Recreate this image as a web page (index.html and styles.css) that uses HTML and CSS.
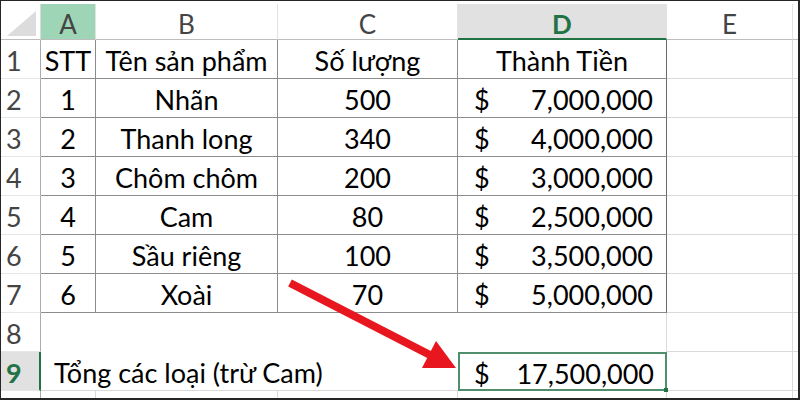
FILE: index.html
```html
<!DOCTYPE html>
<html lang="vi">
    <head>
        <meta charset="UTF-8">
        <title>Bảng tính</title>
        <link rel="stylesheet" href="styles.css">
    </head>
    <body>
        <div class="frame">
            <div class="sheet">
                <!-- tiêu đề cột -->
                <div class="corner"><span class="tri"></span></div>
                <div class="colhdr sel-a">A</div>
                <div class="colhdr">B</div>
                <div class="colhdr">C</div>
                <div class="colhdr sel-d">D</div>
                <div class="colhdr">E</div>
                <div class="colhdr last"></div>

                <!-- dòng 1 -->
                <div class="rowhdr">1</div>
                <div class="cell t">STT</div>
                <div class="cell t">Tên sản phẩm</div>
                <div class="cell t">Số lượng</div>
                <div class="cell t td">Thành Tiền</div>
                <div class="cell"></div>
                <div class="cell last"></div>

                <div class="rowhdr">2</div>
                <div class="cell t">1</div>
                <div class="cell t">Nhãn</div>
                <div class="cell t">500</div>
                <div class="cell t td money"><span>$</span><span>7,000,000</span></div>
                <div class="cell"></div>
                <div class="cell last"></div>

                <div class="rowhdr">3</div>
                <div class="cell t">2</div>
                <div class="cell t">Thanh long</div>
                <div class="cell t">340</div>
                <div class="cell t td money"><span>$</span><span>4,000,000</span></div>
                <div class="cell"></div>
                <div class="cell last"></div>

                <div class="rowhdr">4</div>
                <div class="cell t">3</div>
                <div class="cell t">Chôm chôm</div>
                <div class="cell t">200</div>
                <div class="cell t td money"><span>$</span><span>3,000,000</span></div>
                <div class="cell"></div>
                <div class="cell last"></div>

                <div class="rowhdr">5</div>
                <div class="cell t">4</div>
                <div class="cell t">Cam</div>
                <div class="cell t">80</div>
                <div class="cell t td money"><span>$</span><span>2,500,000</span></div>
                <div class="cell"></div>
                <div class="cell last"></div>

                <div class="rowhdr">6</div>
                <div class="cell t">5</div>
                <div class="cell t">Sầu riêng</div>
                <div class="cell t">100</div>
                <div class="cell t td money"><span>$</span><span>3,500,000</span></div>
                <div class="cell"></div>
                <div class="cell last"></div>

                <div class="rowhdr">7</div>
                <div class="cell t">6</div>
                <div class="cell t">Xoài</div>
                <div class="cell t">70</div>
                <div class="cell t td money"><span>$</span><span>5,000,000</span></div>
                <div class="cell"></div>
                <div class="cell last"></div>

                <!-- dòng 8 (gộp A:D) -->
                <div class="rowhdr">8</div>
                <div class="cell merge8"></div>
                <div class="cell"></div>
                <div class="cell last"></div>

                <!-- dòng 9 -->
                <div class="rowhdr sel-9">9</div>
                <div class="cell total-label">Tổng các loại (trừ Cam)</div>
                <div class="cell money total"><span>$</span><span>17,500,000</span><i class="handle"></i></div>
                <div class="cell"></div>
                <div class="cell last"></div>

                <!-- dòng 10 (bị cắt) -->
                <div class="rowhdr cut"></div>
                <div class="cell cut"></div>
                <div class="cell cut"></div>
                <div class="cell cut"></div>
                <div class="cell cut"></div>
                <div class="cell cut"></div>
                <div class="cell cut last"></div>
            </div>

            <svg class="arrow" width="800" height="400" viewBox="0 0 800 400">
                <line x1="290" y1="283" x2="432" y2="356" stroke="#e8171f" stroke-width="8"/>
                <polygon points="456,368 422,368 436,341" fill="#e8171f"/>
            </svg>
        </div>
    </body>
</html>
```

FILE: styles.css
```css
body {
    margin: 0;
    font-family: Lato, "Open Sans", sans-serif;
}
.frame {
    position: relative;
    width: 800px;
    height: 400px;
    box-sizing: border-box;
    border: 1px solid #262626;
    border-right-width: 2px;
    border-bottom-width: 2px;
    padding-top: 3px;
    background: #fff;
    overflow: hidden;
}
.sheet {
    display: grid;
    grid-template-columns: 40px 55px 182px 180px 209px 126px 1fr;
    grid-template-rows: 36px repeat(9, 39px) 1fr;
    height: 100%;
}
.sheet > div {
    box-sizing: border-box;
    display: flex;
    align-items: center;
    justify-content: center;
    font-size: 27px;
    padding-top: 3px;
    border-right: 1px solid #dadada;
    border-bottom: 1px solid #dadada;
}
.sheet > .last {
    border-right: none;
}
.corner {
    justify-content: flex-end !important;
    align-items: flex-end !important;
    padding: 0 4px 3px 0 !important;
    border-bottom-color: #bdbdbd !important;
}
.tri {
    width: 29px;
    height: 25px;
    background: #dcdcdc;
    clip-path: polygon(100% 0, 100% 100%, 0 100%);
}
.colhdr {
    color: #444;
    padding-top: 5px !important;
    font-size: 26px !important;
    border-bottom-color: #bdbdbd !important;
    border-right-color: #e2e2e2 !important;
}
.colhdr.sel-a {
    background: #9fd5b7;
}
.colhdr.sel-d {
    background: #e1e1e1;
    color: #217346;
    font-weight: bold;
    border-bottom: 2px solid #217346 !important;
}
.rowhdr {
    color: #444;
    border-right-color: #ababab !important;
    border-bottom-color: #e6e6e6 !important;
    justify-content: flex-start !important;
    padding-left: 5px;
}
.rowhdr.sel-9 {
    background: #e1e1e1;
    color: #217346;
    font-weight: bold;
    border-right: 2px solid #217346 !important;
}
.cell {
    color: #000;
}
.cell.t {
    border-right-color: #8c8c8c;
    border-bottom-color: #8c8c8c;
}
.cell.td {
    border-right-color: #6a6a6a;
}
.money {
    justify-content: space-between !important;
    padding-left: 16px;
    padding-right: 13px;
}
.merge8 {
    grid-column: span 4;
    border-bottom: none !important;
}
.total-label {
    grid-column: span 3;
    justify-content: flex-start !important;
    padding-left: 13px;
    border-right: none !important;
}
.total {
    position: relative;
    border: 2px solid #4f8f6d !important;
    padding-left: 14px;
    padding-right: 11px;
}
.handle {
    position: absolute;
    right: -3px;
    bottom: -3px;
    width: 4px;
    height: 4px;
    background: #217346;
}
.cut {
    border-bottom: none !important;
}
.arrow {
    position: absolute;
    left: -1px;
    top: -1px;
    pointer-events: none;
}
```
